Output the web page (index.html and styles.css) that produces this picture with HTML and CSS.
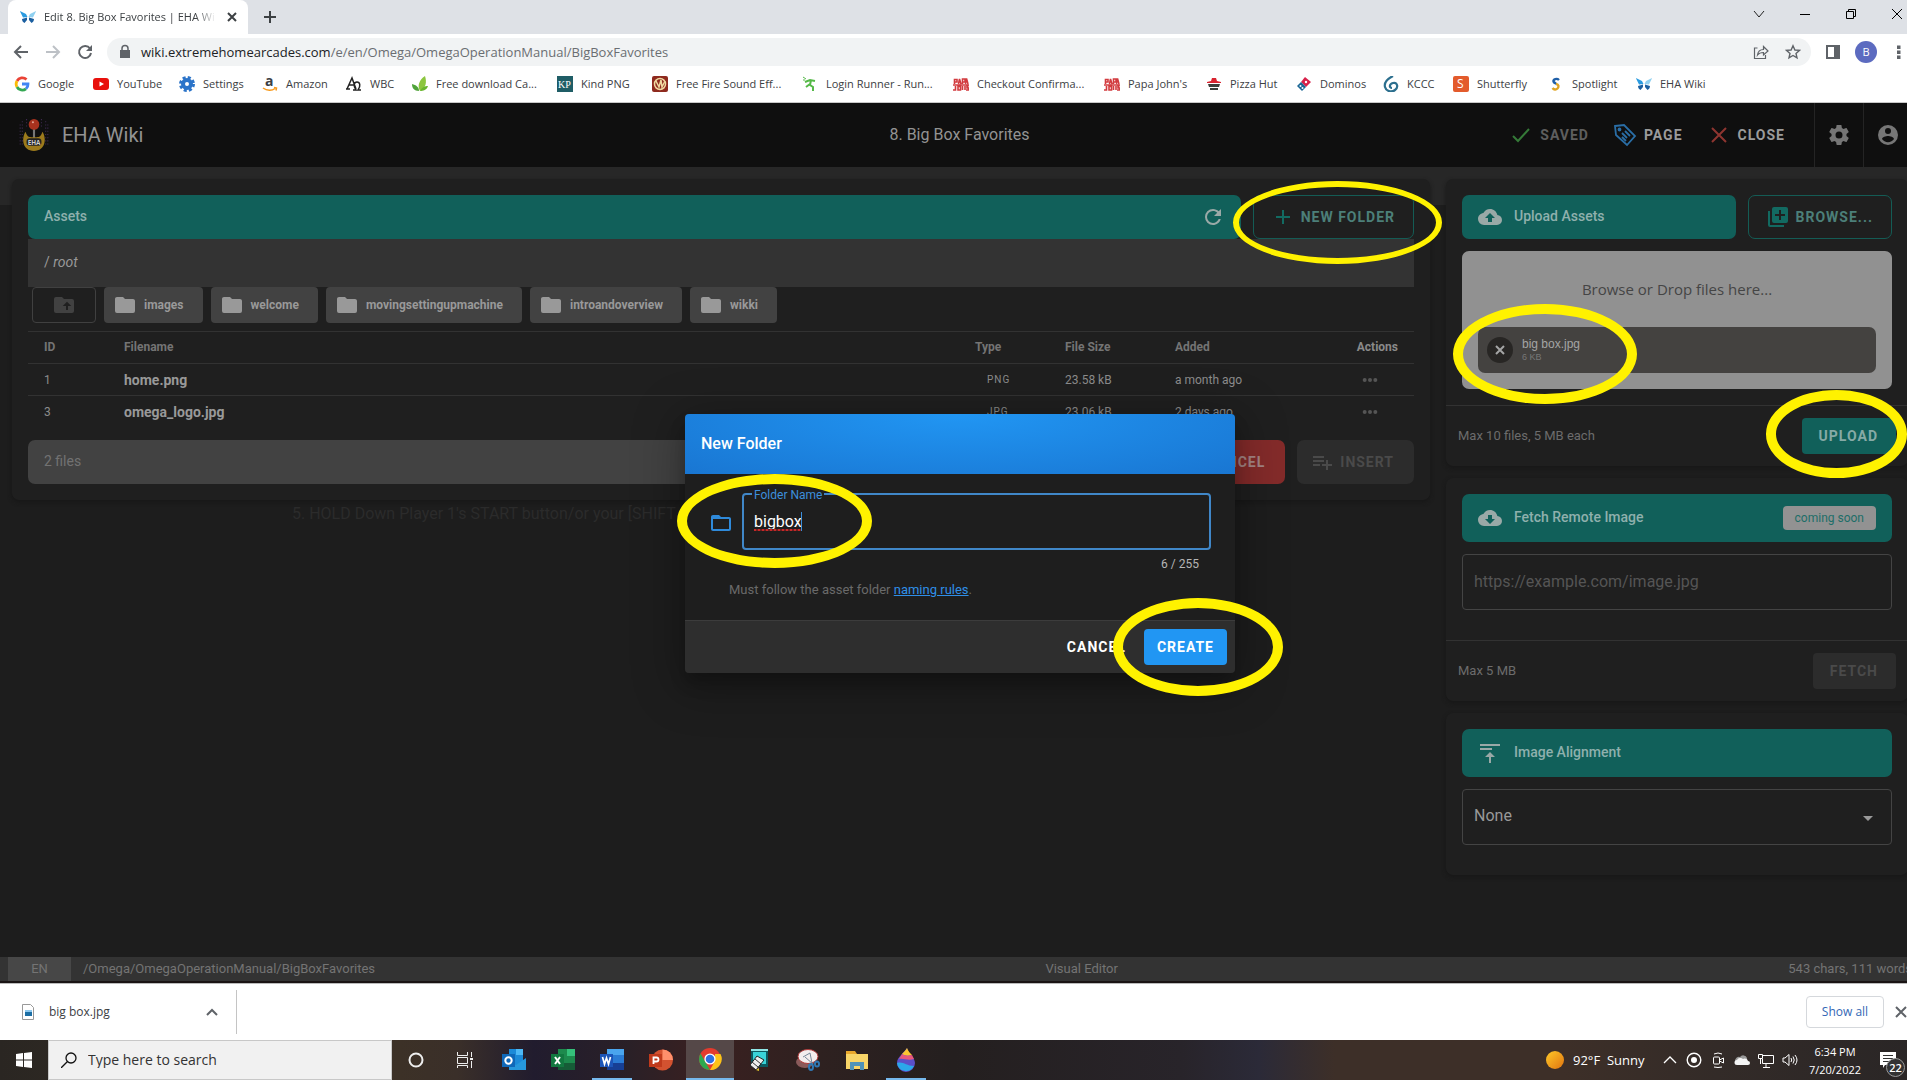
FILE: index.html
```html
<!DOCTYPE html>
<html lang="en">
<head>
<meta charset="utf-8">
<meta name="viewport" content="width=device-width, initial-scale=1">
<title>Edit 8. Big Box Favorites | EHA Wiki</title>
<link rel="stylesheet" href="styles.css">
</head>
<body>
<svg class="defs" aria-hidden="true">
  <symbol id="folder" viewBox="0 0 24 24"><path d="M10,4H4C2.89,4 2,4.89 2,6V18A2,2 0 0,0 4,20H20A2,2 0 0,0 22,18V8C22,6.89 21.1,6 20,6H12L10,4Z"/></symbol>
  <symbol id="dots" viewBox="0 0 24 24"><circle cx="4" cy="12" r="3"/><circle cx="12" cy="12" r="3"/><circle cx="20" cy="12" r="3"/></symbol>
  <symbol id="butterfly" viewBox="0 0 16 16"><path fill="#2a9be0" d="M0 2l6 3 1.500 3L3 8.500C2 6 .5 4 0 2z"/><path fill="#8fd0f0" d="M16 2l-6 3-1.500 3 4.500.5C14 6 15.500 4 16 2z"/><path fill="#1b5fa0" d="M2 10l5-1.500V11l-2.500 3C3 13 2 12 2 10zM14 10L9 8.500V11l2.500 3c1.500-1 2.500-2 2.500-4z"/></symbol>
  <symbol id="papa" viewBox="0 0 16 16"><path fill="none" stroke="#d23b3f" stroke-width="1.600" d="M1.500 8V3.500H4V6H1.500M5.500 8l1-5 1.500 5M9.500 8V3H12v3H9.500M12.500 8l1-5.500L15 8M0 9h16M2.500 10v4H0M5 10.500h2.500V14H5zM9.500 14v-4M12 14v-4M15.500 10.500H14V12h1.500v2H13"/></symbol>
</svg>

<header class="browser">
  <div class="tabstrip">
    <div class="tab">
      <svg class="i16"><use href="#butterfly"/></svg>
      <span class="tab-title">Edit 8. Big Box Favorites | EHA Wi</span>
      <button class="plain" aria-label="Close tab"><svg class="i16" viewBox="0 0 16 16"><path d="M4 4l8 8M12 4l-8 8" stroke="#3c4043" stroke-width="2"/></svg></button>
    </div>
    <button class="plain newtab" aria-label="New tab"><svg class="i16" viewBox="0 0 16 16"><path d="M8 2v12M2 8h12" stroke="#3c4043" stroke-width="2"/></svg></button>
    <div class="winctl">
      <button class="plain" aria-label="Search tabs"><svg class="i16" viewBox="0 0 16 16"><path d="M3 5l5 6 5-6" stroke="#222" fill="none"/></svg></button>
      <button class="plain" aria-label="Minimize"><svg class="i16" viewBox="0 0 16 16"><path d="M3 8.500h10" stroke="#000"/></svg></button>
      <button class="plain" aria-label="Restore"><svg class="i16" viewBox="0 0 16 16"><path d="M3.500 5.500h7v7h-7zM5.500 5V3.500h7v7H11" stroke="#000" fill="none"/></svg></button>
      <button class="plain" aria-label="Close window"><svg class="i16" viewBox="0 0 16 16"><path d="M3 3l10 10M13 3L3 13" stroke="#000"/></svg></button>
    </div>
  </div>
  <div class="toolbar">
    <button class="plain nav" aria-label="Back"><svg class="i16" viewBox="0 0 16 16"><path d="M15 8H2M8 2L2 8l6 6" stroke="#5f6368" stroke-width="2" fill="none"/></svg></button>
    <button class="plain nav" aria-label="Forward"><svg class="i16" viewBox="0 0 16 16"><path d="M1 8h13M8 2l6 6-6 6" stroke="#bdc1c6" stroke-width="2" fill="none"/></svg></button>
    <button class="plain nav" aria-label="Reload"><svg class="i16" viewBox="0 0 16 16"><path d="M13 4.500A6 6 0 1 0 14 9" stroke="#5f6368" stroke-width="2" fill="none"/><path d="M15 1v6H9z" fill="#5f6368"/></svg></button>
    <div class="omnibox">
      <svg class="i16" viewBox="0 0 16 16"><path d="M3 6h10v8H3z" fill="#5f6368"/><path d="M5 7V4.500a3 3 0 0 1 6 0V7" fill="none" stroke="#5f6368" stroke-width="1.500"/></svg>
      <span class="url"><b>wiki.extremehomearcades.com</b>/e/en/Omega/OmegaOperationManual/BigBoxFavorites</span>
      <svg class="i16" viewBox="0 0 16 16"><path d="M4.500 4H1.500v10.500h11V11M4.500 11c.5-4 3-5.500 6-5.500V2.500L15 7l-4.500 4V8.500c-3 0-4.500.5-6 2.500z" fill="none" stroke="#5f6368" stroke-width="1.200"/></svg>
      <svg class="i16" viewBox="0 0 16 16"><path d="M8 1.800l1.900 4.200 4.500.4-3.400 3 1 4.500L8 11.500l-4 2.400 1-4.500-3.400-3L6.100 6z" fill="none" stroke="#5f6368" stroke-width="1.400"/></svg>
    </div>
    <button class="plain" aria-label="Side panel"><svg class="i16" viewBox="0 0 16 16"><path d="M1 1h14v14H1zM3 3v10h6V3z" fill="#5f6368" fill-rule="evenodd"/></svg></button>
    <button class="avatar">B</button>
    <button class="plain" aria-label="Menu"><svg class="i16" viewBox="0 0 16 16"><path fill="#5f6368" d="M6 1.500h3.500V5H6zM6 6.500h3.500V10H6zM6 11.500h3.500V15H6z"/></svg></button>
  </div>
  <nav class="bookmarks">
    <a href="#"><svg class="i16" viewBox="0 0 16 16" fill="none" stroke-width="2.800"><path stroke="#ea4335" d="M3 5a6 6 0 0 1 9.500-1.500"/><path stroke="#fbbc05" d="M3 11a6 6 0 0 1 0-6"/><path stroke="#34a853" d="M3 11a6 6 0 0 0 9 1.800"/><path stroke="#4285f4" d="M8 8h6a6 6 0 0 1-2 4.800"/></svg>Google</a>
    <a href="#"><svg class="i16" viewBox="0 0 16 16"><rect y="2" width="16" height="12" rx="3" fill="#e8100c"/><path d="M6.500 5.500v5L11 8z" fill="#fff"/></svg>YouTube</a>
    <a href="#"><svg class="i16" viewBox="0 0 16 16"><circle cx="8" cy="8" r="4" fill="none" stroke="#2b74c9" stroke-width="4"/><circle cx="8" cy="8" r="6.500" fill="none" stroke="#2b74c9" stroke-width="3" stroke-dasharray="3 2.100"/></svg>Settings</a>
    <a href="#"><svg class="i16" viewBox="0 0 16 16"><text x="3" y="10" class="ico-text" font-size="14" font-weight="700">a</text><path d="M1 12c4 3 9 3 12 .5M12 11.500l2.500.5-.5 2.500" stroke="#f79a1c" stroke-width="1.500" fill="none"/></svg>Amazon</a>
    <a href="#"><svg class="i16" viewBox="0 0 16 16" fill="none" stroke="#222" stroke-width="1.500"><path d="M1 13L6 2l4 11M0 13h4M3 9h5M7 14h3c-3-4-2-8 1-8s4 4 1 8h3"/></svg>WBC</a>
    <a href="#"><svg class="i16" viewBox="0 0 16 16"><path d="M8 15C5 10 7 4 13 0c2 6 1 12-5 15z" fill="#8cc63f"/><path d="M7 15C2 15 0 12 0 8c4 1 7 3 7 7z" fill="#4fa33a"/><path d="M8 15c3 0 7-1 8-5-3 0-6 1-8 5z" fill="#68b52e"/></svg>Free download Ca...</a>
    <a href="#"><svg class="i16" viewBox="0 0 16 16"><path d="M0 0h16v16H0z" fill="#1f5d66"/><text x="1" y="12" class="ico-serif" font-size="10" fill="#fff">KP</text></svg>Kind PNG</a>
    <a href="#"><svg class="i16" viewBox="0 0 16 16"><rect width="16" height="16" rx="2" fill="#8e2a1e"/><circle cx="8" cy="8" r="5.500" fill="none" stroke="#f0d9a0" stroke-width="1.500"/><path d="M4 5l3 6 2-7 1 7 3-6" fill="none" stroke="#f0d9a0" stroke-width="1.500"/></svg>Free Fire Sound Eff...</a>
    <a href="#"><svg class="i16" viewBox="0 0 16 16" fill="none" stroke="#55b948" stroke-width="2"><path d="M3 6l5-2 5 1M9 4l-1 5 3 2v4M8 8l-4 3"/><path stroke-width="1" d="M1 1l3 2M1 4h2"/></svg>Login Runner - Run...</a>
    <a href="#"><svg class="i16"><use href="#papa"/></svg>Checkout Confirma...</a>
    <a href="#"><svg class="i16"><use href="#papa"/></svg>Papa John's</a>
    <a href="#"><svg class="i16" viewBox="0 0 16 16"><path d="M1 6l4-1 1-3h4l1 3 4 1v1H1z" fill="#d8232f"/><path d="M2 8h12l-1 3H3zM4 12h8v2H4z" fill="#3b3f3b"/></svg>Pizza Hut</a>
    <a href="#"><svg class="i16" viewBox="0 0 16 16"><path d="M9 1l6 5-5 5-5-5z" fill="#d8214a"/><path d="M5 6l5 5-4 4-5-5z" fill="#1b6795"/><g fill="#fff"><circle cx="10" cy="6" r="1.200"/><circle cx="4.500" cy="10" r="1"/><circle cx="6.500" cy="12" r="1"/></g></svg>Dominos</a>
    <a href="#"><svg class="i16" viewBox="0 0 16 16"><path d="M10 0C4 3 1 7 2 11s6 6 10 3 2-8-2-7-4 5-1 5" fill="none" stroke="#2c6f8e" stroke-width="2.200"/></svg>KCCC</a>
    <a href="#"><svg class="i16" viewBox="0 0 16 16"><rect width="16" height="16" rx="2" fill="#e35b2c"/><text x="4" y="12" class="ico-text" font-size="12" fill="#fff">S</text></svg>Shutterfly</a>
    <a href="#"><svg class="i16" viewBox="0 0 16 16"><path d="M11 4C9 2 5 3 5.500 5.500 6 7 8 7.500 8.500 8" fill="none" stroke="#1f5fa8" stroke-width="2.400"/><path d="M8 8c3 .5 3 3 1.500 4.500S6 14 4.500 12" fill="none" stroke="#e0a524" stroke-width="2.400"/></svg>Spotlight</a>
    <a href="#"><svg class="i16"><use href="#butterfly"/></svg>EHA Wiki</a>
  </nav>
</header>

<div class="app">
  <header class="appbar">
    <div class="brand">
      <svg class="logo" viewBox="0 0 30 32"><g stroke="#3f2b52" stroke-dasharray="1 2"><path d="M2 6v20M4 3v24M26 3v24M28 6v20M8 1v8M22 1v8"/></g><path d="M15 7v12" stroke="#777" stroke-width="2"/><circle cx="15" cy="6" r="5" fill="#a8321e"/><circle cx="14" cy="4" r="1" fill="#e0a090"/><path d="M7 13c-4 6-3 18 8 18s12-12 8-18c-2 6-4 5-8 5s-6 1-8-5z" fill="#9c7a1c"/><rect x="8" y="19" width="14" height="7" rx="3" fill="#222"/><text x="9" y="25" class="ico-text" font-size="6" font-weight="700" fill="#ccc">EHA</text></svg>
      <span>EHA Wiki</span>
    </div>
    <h1>8. Big Box Favorites</h1>
    <div class="appbar-actions">
      <button class="btn saved"><svg class="i24" viewBox="0 0 24 24"><path d="M4 13l5 5L20 6" fill="none" stroke="#357a38" stroke-width="2"/></svg>SAVED</button>
      <button class="btn"><svg class="i24" viewBox="0 0 24 24" fill="none" stroke="#2a6ea6" stroke-width="1.800"><path d="M2 3l9-1 11 11-8 9L3 12z"/><path d="M9 10l5 5M12 8l5 5M9 14l4 4"/><circle cx="6.500" cy="6.500" r="1"/></svg>PAGE</button>
      <button class="btn"><svg class="i24" viewBox="0 0 24 24"><path d="M5 5l14 14M19 5L5 19" stroke="#8e3530" stroke-width="2"/></svg>CLOSE</button>
      <button class="cell" aria-label="Settings"><svg class="i24" viewBox="0 0 24 24"><path d="M12,15.500A3.500,3.500 0 0,1 8.500,12A3.500,3.500 0 0,1 12,8.500A3.500,3.500 0 0,1 15.500,12A3.500,3.500 0 0,1 12,15.500M19.430,12.970C19.470,12.650 19.500,12.330 19.500,12C19.500,11.670 19.470,11.340 19.430,11L21.540,9.370C21.730,9.220 21.780,8.950 21.660,8.730L19.660,5.270C19.540,5.050 19.270,4.960 19.050,5.050L16.560,6.050C16.040,5.660 15.500,5.320 14.870,5.070L14.500,2.420C14.460,2.180 14.250,2 14,2H10C9.750,2 9.540,2.180 9.500,2.420L9.130,5.070C8.500,5.320 7.960,5.660 7.440,6.050L4.950,5.050C4.730,4.960 4.460,5.050 4.340,5.270L2.340,8.730C2.210,8.950 2.270,9.220 2.460,9.370L4.570,11C4.530,11.340 4.500,11.670 4.500,12C4.500,12.330 4.530,12.650 4.570,12.970L2.460,14.630C2.270,14.780 2.210,15.050 2.340,15.270L4.340,18.730C4.460,18.950 4.730,19.030 4.950,18.950L7.440,17.940C7.960,18.340 8.500,18.680 9.130,18.930L9.500,21.580C9.540,21.820 9.750,22 10,22H14C14.250,22 14.460,21.820 14.500,21.580L14.870,18.930C15.500,18.670 16.040,18.340 16.560,17.940L19.050,18.950C19.270,19.030 19.540,18.950 19.660,18.730L21.660,15.270C21.780,15.050 21.730,14.780 21.540,14.630L19.430,12.970Z"/></svg></button>
      <button class="cell" aria-label="Account"><svg class="i24" viewBox="0 0 24 24"><path fill-rule="evenodd" d="M12,2A10,10 0 0,0 2,12A10,10 0 0,0 12,22A10,10 0 0,0 22,12A10,10 0 0,0 12,2ZM12,5A3,3 0 0,1 15,8A3,3 0 0,1 12,11A3,3 0 0,1 9,8A3,3 0 0,1 12,5ZM12,19.200C9.500,19.200 7.290,17.920 6,16C6.030,14 10,12.900 12,12.900C14,12.900 17.970,14 18,16C16.710,17.920 14.500,19.200 12,19.200Z"/></svg></button>
    </div>
  </header>

  <main class="work">
    <div class="left">
      <section class="panel assets">
        <div class="row">
          <div class="bar grow"><h2>Assets</h2><button class="plain refresh" aria-label="Refresh"><svg class="i24" viewBox="0 0 24 24"><path d="M17.650,6.350C16.200,4.900 14.210,4 12,4A8,8 0 0,0 4,12A8,8 0 0,0 12,20C15.730,20 18.840,17.450 19.730,14H17.650C16.830,16.330 14.610,18 12,18A6,6 0 0,1 6,12A6,6 0 0,1 12,6C13.660,6 15.140,6.690 16.220,7.780L13,11H20V4L17.650,6.350Z"/></svg></button></div>
          <button class="btn outline ring ring-new"><svg class="i24" viewBox="0 0 24 24"><path d="M12 5v14M5 12h14" stroke="#126a61" stroke-width="2"/></svg>NEW FOLDER</button>
        </div>
        <div class="path">/ <em>root</em></div>
        <div class="folders">
          <button class="folder up" aria-label="Parent folder" disabled><svg class="i24" viewBox="0 0 24 24"><path d="M20,6A2,2 0 0,1 22,8V18A2,2 0 0,1 20,20H4A2,2 0 0,1 2,18V6A2,2 0 0,1 4,4H10L12,6H20M10.750,13H14V17H16V13H19.250L15,8.750"/></svg></button>
          <button class="folder"><svg class="i24"><use href="#folder"/></svg>images</button>
          <button class="folder"><svg class="i24"><use href="#folder"/></svg>welcome</button>
          <button class="folder"><svg class="i24"><use href="#folder"/></svg>movingsettingupmachine</button>
          <button class="folder"><svg class="i24"><use href="#folder"/></svg>introandoverview</button>
          <button class="folder"><svg class="i24"><use href="#folder"/></svg>wikki</button>
        </div>
        <table>
          <thead><tr><th class="c-id">ID</th><th>Filename</th><th class="c-type">Type</th><th class="c-size">File Size</th><th class="c-added">Added</th><th class="c-act">Actions</th></tr></thead>
          <tbody>
            <tr><td>1</td><td class="name">home.png</td><td><span class="type">PNG</span></td><td>23.58 kB</td><td>a month ago</td><td class="c-act"><button class="plain more" aria-label="Actions for home.png"><svg class="i16"><use href="#dots"/></svg></button></td></tr>
            <tr><td>3</td><td class="name">omega_logo.jpg</td><td><span class="type">JPG</span></td><td>23.06 kB</td><td>2 days ago</td><td class="c-act"><button class="plain more" aria-label="Actions for omega_logo.jpg"><svg class="i16"><use href="#dots"/></svg></button></td></tr>
          </tbody>
        </table>
        <div class="row foot">
          <div class="count grow">2 files</div>
          <button class="btn red"><svg class="i24" viewBox="0 0 24 24"><path d="M6 6l12 12M18 6L6 18" stroke="#a08080" stroke-width="2"/></svg>CANCEL</button>
          <button class="btn off tall"><svg class="i24" viewBox="0 0 24 24"><path d="M3,16H10V14H3M18,14V10H16V14H12V16H16V20H18V16H22V14M14,6H3V8H14M14,10H3V12H14V10Z"/></svg>INSERT</button>
        </div>
      </section>
      <p class="ghost">5. HOLD Down Player 1's START button/or your [SHIFT</p>
    </div>

    <aside class="right">
      <section class="panel">
        <div class="pad">
          <div class="row">
            <div class="bar grow"><svg class="i24" viewBox="0 0 24 24"><path d="M14,13V17H10V13H7L12,8L17,13M19.350,10.030C18.670,6.590 15.640,4 12,4C9.110,4 6.600,5.640 5.350,8.030C2.340,8.360 0,10.900 0,14A6,6 0 0,0 6,20H19A5,5 0 0,0 24,15C24,12.360 21.950,10.220 19.350,10.030Z"/></svg><h2>Upload Assets</h2></div>
            <button class="btn outline"><svg class="i24 teal" viewBox="0 0 24 24"><path d="M19,11H15V15H13V11H9V9H13V5H15V9H19M20,2H8A2,2 0 0,0 6,4V16A2,2 0 0,0 8,18H20A2,2 0 0,0 22,16V4A2,2 0 0,0 20,2M4,6H2V20A2,2 0 0,0 4,22H18V20H4V6Z"/></svg>BROWSE...</button>
          </div>
          <div class="drop">
            <p>Browse or Drop files here...</p>
            <div class="upfile"><div class="upinfo ring ring-file"><button class="remove" aria-label="Remove file"><svg class="i16" viewBox="0 0 16 16"><path d="M4 4l8 8M12 4l-8 8" stroke="#a5a5a5" stroke-width="2"/></svg></button><div><strong>big box.jpg</strong><small>6 KB</small></div></div></div>
          </div>
        </div>
        <div class="actions"><span>Max 10 files, 5 MB each</span><button class="btn solid ring ring-upload">UPLOAD</button></div>
      </section>
      <section class="panel">
        <div class="pad fetch">
          <div class="bar high"><svg class="i24" viewBox="0 0 24 24"><path d="M17,13L12,18L7,13H10V9H14V13M19.350,10.030C18.670,6.590 15.640,4 12,4C9.110,4 6.600,5.640 5.350,8.030C2.340,8.360 0,10.900 0,14A6,6 0 0,0 6,20H19A5,5 0 0,0 24,15C24,12.360 21.950,10.220 19.350,10.030Z"/></svg><h2>Fetch Remote Image</h2><span class="soon">coming soon</span></div>
          <input class="field" type="url" aria-label="Image URL" placeholder="https://example.com/image.jpg">
        </div>
        <div class="actions"><span>Max 5 MB</span><button class="btn off" disabled>FETCH</button></div>
      </section>
      <section class="panel">
        <div class="pad align">
          <div class="bar high"><svg class="i24" viewBox="0 0 24 24"><path d="M2 3h20v2H2zM2 7h12v2H2zM7 16l5-5 5 5h-4v6h-2v-6z"/></svg><h2>Image Alignment</h2></div>
          <div class="selectbox"><select class="field" aria-label="Image Alignment"><option>None</option><option>Left</option></select><svg class="i24" viewBox="0 0 24 24"><path d="M7,10L12,15L17,10H7Z"/></svg></div>
        </div>
      </section>
    </aside>
  </main>

  <footer class="status"><div class="status-left"><span class="lang">EN</span><span>/Omega/OmegaOperationManual/BigBoxFavorites</span></div><span>Visual Editor</span><span>543 chars, 111 words</span></footer>

  <div class="overlay">
    <div class="dialog" role="dialog" aria-labelledby="dlg-title">
      <h2 id="dlg-title">New Folder</h2>
      <div class="dialog-body">
        <div class="input-row">
          <svg class="i24" viewBox="0 0 24 24"><path d="M20,18H4V8H20M20,6H12L10,4H4C2.890,4 2,4.890 2,6V18A2,2 0 0,0 4,20H20A2,2 0 0,0 22,18V8C22,6.890 21.100,6 20,6Z"/></svg>
          <div class="outlined ring ring-name">
            <label for="fname">Folder Name</label>
            <input id="fname" type="text" value="bigbox" maxlength="255" spellcheck="false">
            <span class="squiggle"></span>
          </div>
        </div>
        <div class="counter">6 / 255</div>
        <p>Must follow the asset folder <a href="#">naming rules</a>.</p>
      </div>
      <div class="dialog-foot"><button class="btn text">CANCEL</button><button class="btn create ring ring-create">CREATE</button></div>
    </div>
  </div>
</div>

<div class="downloads">
  <div class="dl-item"><svg class="i16" viewBox="0 0 16 16"><path d="M2.500.5h8l3 3v12h-11z" fill="#fff" stroke="#999"/><path d="M5 6h7v6H5z" fill="#1c6ea4"/><path d="M5 6h7v2H5z" fill="#8cc8ee"/></svg><span>big box.jpg</span><button class="plain" aria-label="Options"><svg class="i16" viewBox="0 0 16 16"><path d="M3 11l5-5 5 5" fill="none" stroke="#5f6368" stroke-width="2"/></svg></button></div>
  <button class="showall">Show all</button>
  <button class="plain" aria-label="Close downloads"><svg class="i16" viewBox="0 0 16 16"><path d="M3 3l10 10M13 3L3 13" stroke="#5f6368" stroke-width="2"/></svg></button>
</div>

<footer class="taskbar">
  <button class="plain start" aria-label="Start"><svg class="i16" viewBox="0 0 16 16"><path d="M0 2l7-1v6.500H0zM8 1l8-1v7.500H8zM0 8.500h7V15l-7-1zM8 8.500h8V16l-8-1z" fill="#fff"/></svg></button>
  <label class="search"><svg class="i16" viewBox="0 0 16 16"><circle cx="10" cy="6" r="5" fill="none" stroke="#111" stroke-width="1.300"/><path d="M6.500 9.500L0 16" stroke="#111" stroke-width="1.300"/></svg><input type="text" aria-label="Search" placeholder="Type here to search"></label>
  <div class="apps">
    <button class="plain" aria-label="Cortana"><svg viewBox="0 0 24 24"><circle cx="12" cy="12" r="6.500" fill="none" stroke="#eee" stroke-width="2"/></svg></button>
    <button class="plain" aria-label="Task view"><svg viewBox="0 0 24 24" fill="none" stroke="#eee"><path d="M4.500 4v3.500h10V4M4.500 9.500h10v6h-10zM4.500 20v-2.500h10V20M18.500 4v5M18.500 13v7"/><path d="M17 11h3" stroke-width="2"/></svg></button>
    <button class="plain" aria-label="Outlook"><svg viewBox="0 0 24 24"><path d="M7 1h14v16H7z" fill="#1b8ad8"/><path d="M14 1h7v6h-7z" fill="#4db8f5"/><path d="M7 13l7 4 10-7v12H7z" fill="#2698dc"/><path d="M0 6h13v13H0z" fill="#0f68b8"/><circle cx="6.500" cy="12.500" r="3.200" fill="none" stroke="#fff" stroke-width="2"/></svg></button>
    <button class="plain" aria-label="Excel"><svg viewBox="0 0 24 24"><path d="M7 1h17v21H7z" fill="#1d8a4d"/><path d="M16 1h8v7h-8z" fill="#35c07a"/><path d="M7 15h17v7H7z" fill="#165c37"/><path d="M0 6h13v13H0z" fill="#127840"/><path d="M4 9l5 7M9 9l-5 7" stroke="#fff" stroke-width="2"/></svg></button>
    <button class="plain open" aria-label="Word"><svg viewBox="0 0 24 24"><path d="M7 1h17v21H7z" fill="#2a7bd4"/><path d="M7 1h17v6H7z" fill="#4aa5ee"/><path d="M7 15h17v7H7z" fill="#173f94"/><path d="M0 6h13v13H0z" fill="#1c55b8"/><path d="M2.500 9l2 7 2-6 2 6 2-7" fill="none" stroke="#fff" stroke-width="1.700"/></svg></button>
    <button class="plain" aria-label="PowerPoint"><svg viewBox="0 0 24 24"><circle cx="13.500" cy="12" r="10.500" fill="#d35230"/><path d="M13.500 1.500A10.500 10.500 0 0 1 24 12H13.500z" fill="#ff8f6b"/><path d="M0 6h13v13H0z" fill="#c03a1c"/><path d="M4.500 16V9.500h3a2 2 0 0 1 0 4h-3" fill="none" stroke="#fff" stroke-width="1.800"/></svg></button>
    <button class="plain active" aria-label="Chrome"><svg viewBox="0 0 24 24"><circle cx="12" cy="12" r="11" fill="#e33b2e"/><path d="M2.500 6.500L12 23A11 11 0 0 1 2.500 6.500z" fill="#2da94f"/><path d="M12 23l5-9V7h5.500A11 11 0 0 1 12 23z" fill="#fdc318"/><circle cx="12" cy="12" r="5.600" fill="#fff"/><circle cx="12" cy="12" r="4.300" fill="#2f6fe0"/></svg></button>
    <button class="plain" aria-label="Editor"><svg viewBox="0 0 24 24"><path d="M4 1h17v18H4z" fill="#0c5a60"/><path d="M4 1h17v2H4z" fill="#8fe6e6"/><path d="M6 4h13v12H6z" fill="#39d3d8"/><path d="M3 17L10 8l7 4-8 10z" fill="#eee" stroke="#222"/><path d="M5 14l6 5M8 11l6 5" stroke="#333"/><path d="M9 22l3-2v3z" fill="#dfc52c"/></svg></button>
    <button class="plain" aria-label="Snipping Tool"><svg viewBox="0 0 24 24"><ellipse cx="9" cy="14" rx="9" ry="6" fill="#8a5a5a"/><ellipse cx="12" cy="8.500" rx="10" ry="7" fill="#f3eeee" stroke="#b03a3a"/><path d="M7 9l7-4M14 5l2 10M9 9l8 7" stroke="#789" fill="none"/><g fill="none" stroke="#2f78b5" stroke-width="2"><ellipse cx="15" cy="19" rx="2" ry="3"/><ellipse cx="21" cy="16" rx="2" ry="2.500"/></g></svg></button>
    <button class="plain" aria-label="File Explorer"><svg viewBox="0 0 24 24"><path d="M1 3h9l2 3h11v15H1z" fill="#e9a82c"/><path d="M1 6h22v15H1z" fill="#f8d568"/><path d="M5 14h14v8h-4v-4H9v4H5z" fill="#4f93b8"/></svg></button>
    <button class="plain open" aria-label="Paint 3D"><svg viewBox="0 0 24 24"><path d="M13 0c1 6 8 9 8 15a9 9 0 0 1-18 0C3 9 10 5 13 0z" fill="#5b4fc9"/><path d="M13 0c1 3 3 5 5 7-4 1-7 1-10-1 2-2 4-4 5-6z" fill="#fbc531"/><path d="M8 6c3 2 6 2 10 1l2 4c-6 2-10-1-15 0z" fill="#e8577d"/><path d="M3 15c6-2 9 3 17 3a9 9 0 0 1-17-3z" fill="#2ba7ea"/></svg></button>
  </div>
  <div class="tray">
    <svg class="i20" viewBox="0 0 20 20"><defs><linearGradient id="sun" x2="1" y2="1"><stop offset="0" stop-color="#ffc928"/><stop offset="1" stop-color="#e07410"/></linearGradient></defs><circle cx="10" cy="10" r="9" fill="url(#sun)"/></svg>
    <span class="weather">92°F&nbsp; Sunny</span>
    <svg class="i16" viewBox="0 0 16 16"><path d="M2 11l6-6 6 6" fill="none" stroke="#fff" stroke-width="1.300"/></svg>
    <svg class="i16" viewBox="0 0 16 16"><circle cx="8" cy="8" r="6.800" fill="none" stroke="#fff" stroke-width="1.400"/><circle cx="8" cy="8" r="3" fill="#fff"/></svg>
    <svg class="i16" viewBox="0 0 16 16" fill="none" stroke="#fff"><rect x="3.500" y="5" width="6" height="7" rx="1"/><path d="M9.500 8l4-2v5l-4-2M4 2q4-2 8 0M4 15q4 1 8 0"/></svg>
    <svg class="i16" viewBox="0 0 16 16"><path d="M1 9a4 4 0 0 1 5-4 4 4 0 0 1 7 1v6H2z" fill="#999"/><path d="M3 13a2.500 2.500 0 0 1 0-5 4 4 0 0 1 6-1 3.500 3.500 0 0 1 5 2 2 2 0 0 1 0 4z" fill="#f4f4f4"/></svg>
    <svg class="i16" viewBox="0 0 16 16" fill="none" stroke="#fff"><path d="M5 3.500h10.500v8h-11V7M8 12v3M5 15.500h7M.5 2.500h4v4h-4zM2.500 7v5"/></svg>
    <svg class="i16" viewBox="0 0 16 16" fill="none" stroke="#fff"><path d="M1 6v4h2l4 3.500v-11L3 6zM9 6q1.500 2 0 4M11 4.500q2.500 3.500 0 7M13 3q4 5 0 10"/></svg>
    <div class="clock"><span>6:34 PM</span><span>7/20/2022</span></div>
    <button class="plain notif" aria-label="Notifications"><svg class="i16" viewBox="0 0 16 16"><path d="M0 0h16v13H5l-2 3v-3H0z" fill="#fff"/><path d="M3 3.500h10M3 6.500h10M3 9.500h6" stroke="#333"/></svg><span>22</span></button>
  </div>
</footer>
</body>
</html>
```
FILE: styles.css
```css
*, *::after { box-sizing: border-box; }
body {
  margin: 0;
  min-height: 100vh;
  display: flex;
  flex-direction: column;
  overflow-x: hidden;
  background: #1d1d1d;
  color: #999;
  font: 12px/16px Roboto, sans-serif;
}
h1, h2, p { margin: 0; font-weight: 400; }
button, input, select { font: inherit; color: inherit; }
svg { display: block; flex: none; }
svg:not([fill]) { fill: currentColor; }
.defs { position: absolute; width: 0; height: 0; }
.i16 { width: 16px; height: 16px; }
.i20 { width: 20px; height: 20px; }
.i24 { width: 24px; height: 24px; }
.ico-text { font-family: "Open Sans", sans-serif; }
.ico-serif { font-family: "Liberation Serif", serif; }
.plain { display: flex; align-items: center; justify-content: center; border: 0; padding: 0; background: none; }
.grow { flex: 1; }
.row { display: flex; gap: 12px; }

/* Browser window */
.browser, .downloads, .taskbar { font-family: "Open Sans", sans-serif; }
.browser { background: #fff; border-bottom: 1px solid #c8c8c8; color: #3c4043; }
.tabstrip { display: flex; align-items: center; height: 34px; padding-left: 8px; background: #dee1e6; }
.tab { display: flex; align-items: center; gap: 8px; width: 240px; height: 34px; padding: 0 8px 0 12px; background: #fff; border-radius: 8px 8px 0 0; }
.tab-title { flex: 1; overflow: hidden; white-space: nowrap; font-size: 11px; mask-image: linear-gradient(to right, #000 88%, transparent); }
.newtab { margin-left: 14px; }
.winctl { display: flex; gap: 30px; margin: 0 2px 6px auto; }
.toolbar { display: flex; align-items: center; gap: 14px; height: 34px; padding-left: 13px; margin-top: 1px; }
.nav { margin-right: 2px; }
.omnibox { display: flex; align-items: center; gap: 16px; flex: 1; height: 28px; margin-left: -2px; padding: 0 10px; border-radius: 14px; background: #f1f3f4; }
.url { flex: 1; margin-left: -8px; font-size: 13px; line-height: 20px; color: #6a6e72; }
.url b { font-weight: 400; color: #202124; }
.avatar { width: 22px; height: 22px; padding: 0; border: 0; border-radius: 50%; background: #5c6bc0; color: #fff; font-size: 11px; line-height: 22px; }
.bookmarks { display: grid; grid-template-columns: 79px 86px 83px 84px 66px 145px 95px 150px 151px 151px 102px 90px 87px 70px 95px 88px auto; align-items: center; height: 33px; padding: 0 0 3px 14px; }
.bookmarks a { display: flex; align-items: center; gap: 8px; color: #3c4043; text-decoration: none; white-space: nowrap; font-size: 11px; line-height: 18px; }

/* Wiki application */
.app { position: relative; flex: 1; display: flex; flex-direction: column; border-bottom: 2px solid #1a1414; }
.appbar { display: grid; grid-template-columns: 1fr auto 1fr; align-items: center; height: 64px; background: #0f0f0f; }
.brand { display: flex; align-items: center; gap: 12px; padding-left: 18px; font-size: 20px; color: #939393; }
.logo { width: 32px; height: 34px; }
.appbar h1 { font-size: 16px; line-height: 20px; margin-left: 12px; color: #939393; }
.appbar-actions { display: flex; align-items: center; justify-content: flex-end; height: 64px; margin-right: -5px; }
.appbar-actions .btn { gap: 7px; padding: 0 12px; color: #9b9b9b; }
.appbar-actions .btn.saved { color: #5e5e5e; }
.appbar-actions .btn:nth-child(3) { margin-right: 17px; }
.cell { display: flex; align-items: center; justify-content: center; width: 49px; height: 64px; padding: 0; border: 0; border-left: 1px solid #242424; background: none; color: #767676; }

.btn { position: relative; display: flex; align-items: center; justify-content: center; gap: 6px; height: 36px; padding: 0 18px 0 17px; border: 0; border-radius: 4px; background: none; font-size: 14px; font-weight: 700; letter-spacing: 1px; white-space: nowrap; }
.outline { height: 44px; border: 1px solid #145c55; border-radius: 7px; color: #4c7f79; }
.outline .teal { color: #126a61; }
.solid { background: #11605a; color: #86aaa6; }
.red { height: 44px; background: #842b2a; border-radius: 7px; padding-right: 20px; color: #a58484; }
.off { background: #2c2c2c; color: #4a4a4a; }
.off.tall { height: 44px; border-radius: 7px; padding: 0 20px 0 13px; }

.work { flex: 1; display: flex; gap: 16px; padding: 12px 0 12px 12px; background: linear-gradient(#272727 38px, #1d1d1d 38px); }
.left { flex: 1; min-width: 0; }
.right { width: 462px; margin-right: -1px; display: flex; flex-direction: column; gap: 12px; }
.panel { background: #1f1f1f; border-radius: 7px; box-shadow: 0 2px 4px #171717; }
.assets { padding: 16px; }
.bar { display: flex; align-items: center; gap: 12px; height: 44px; padding: 0 16px; border-radius: 7px; background: #11605a; color: #9aa9a7; }
.bar h2 { flex: 1; padding-bottom: 2px; font-size: 14px; font-weight: 500; color: #8fb0ad; }
.bar.high { height: 48px; }
.path { height: 48px; padding: 0 16px; background: #333; font-size: 14px; line-height: 46px; color: #999; }
.folders { display: flex; gap: 8px; padding: 0 4px; }
.folder { display: flex; align-items: center; gap: 7px; height: 36px; padding: 0 19px 0 9px; border: 0; border-radius: 4px; background: #424242; font-weight: 700; color: #999; }
.folder.up { width: 64px; padding: 0; justify-content: center; border: 1px solid #404040; background: none; color: #414141; }
table { width: 100%; margin-top: 8px; table-layout: fixed; border-collapse: collapse; }
th, td { height: 32px; padding: 0 16px; border-top: 1px solid #323232; text-align: left; font-weight: 400; color: #8c8c8c; }
th { padding-bottom: 2px; font-weight: 700; color: #747474; }
.c-id { width: 80px; }
.c-type { width: 90px; }
.c-size { width: 110px; }
.c-added { width: 150px; }
.c-act { width: 105px; text-align: right; }
th.c-act { color: #8a8a8a; }
td.name { font-size: 14px; font-weight: 700; color: #999; }
.type { margin-left: 12px; font-size: 10px; letter-spacing: 1px; }
.more { margin: 0 16px 0 auto; color: #555; width: 24px; }
.foot { margin-top: 12px; }
.count { height: 44px; padding: 0 16px; border-radius: 7px; background: #424242; font-size: 14px; line-height: 42px; color: #727272; }
.ghost { padding: 4px 0 0 280px; font-size: 16px; line-height: 20px; color: #2b2b2b; white-space: nowrap; }

.pad { padding: 16px; }
.pad.fetch, .pad.align { padding-bottom: 30px; }
.drop { margin-top: 12px; padding: 24px 16px 16px; height: 138px; border-radius: 7px; background: #919191; }
.drop p { font: 15px/28px "Open Sans", sans-serif; text-align: center; color: #454545; }
.upfile { margin-top: 24px; border-radius: 7px; background: #444240; font-family: "Liberation Sans", sans-serif; }
.upinfo { position: relative; display: flex; align-items: center; gap: 9px; width: 120px; height: 46px; padding-left: 9px; }
.upfile strong, .upfile small { display: block; font-weight: 400; }
.upfile strong { font-size: 12px; line-height: 14px; color: #a5a5a5; white-space: nowrap; }
.upfile small { font-size: 9px; line-height: 12px; color: #777; }
.remove { display: flex; align-items: center; justify-content: center; width: 26px; height: 26px; padding: 0; border: 0; border-radius: 50%; background: #282624; }
.actions { display: flex; align-items: center; justify-content: space-between; height: 61px; padding: 0 12px; border-top: 1px solid #323232; color: #6c6c6c; font-size: 13px; }
.field { display: block; width: 100%; height: 56px; margin-top: 12px; padding: 0 11px 2px; border: 1px solid #444; border-radius: 4px; background: none; font-size: 16px; appearance: none; }
.field::placeholder { color: #555; opacity: 1; }
.soon { padding: 4px 12px; border-radius: 4px; background: #929292; color: #1d6e68; }
.selectbox { position: relative; }
.selectbox svg { position: absolute; right: 12px; top: 17px; }
.status { display: flex; align-items: center; justify-content: space-between; height: 24px; margin-right: -5px; background: #333; color: #747474; font-size: 13px; }
.status-left { display: flex; align-items: center; gap: 12px; padding-left: 8px; }
.lang { width: 63px; line-height: 24px; background: #474747; text-align: center; }

/* New folder dialog */
.overlay { position: absolute; inset: 0 -13px -2px 0; display: flex; align-items: center; justify-content: center; pointer-events: none; }
.dialog { width: 550px; border-radius: 4px; background: #1e1e1e; box-shadow: 0 11px 15px rgba(0,0,0,.2), 0 9px 46px 8px rgba(0,0,0,.25); pointer-events: auto; }
.dialog h2 { height: 60px; padding: 0 16px; border-radius: 4px 4px 0 0; background: radial-gradient(ellipse at top, #2196f3, #1976d2); color: #fff; font-size: 16px; font-weight: 500; line-height: 60px; }
.dialog-body { height: 146px; padding: 19px 24px 0; }
.input-row { display: flex; align-items: center; gap: 9px; color: #2f8ada; }
.input-row > svg { margin-top: 4px; }
.outlined { position: relative; flex: 1; border: 2px solid #4087c8; border-radius: 4px; }
.outlined label { position: absolute; left: 8px; top: -7px; padding: 0 2px; background: #1e1e1e; color: #3d8fdc; line-height: 14px; z-index: 1; }
.outlined input { display: block; width: 100%; height: 53px; padding: 0 10px; border: 0; outline: 0; background: none; color: #fff; font-size: 16px; }
.squiggle { position: absolute; left: 10px; top: 34px; width: 48px; height: 2px; background: repeating-linear-gradient(90deg, #c62828 0 2px, #6b2020 2px 4px); }
.squiggle::after { content: ""; position: absolute; right: 0; bottom: 0; width: 1px; height: 19px; background: #3d8fdc; }
.counter { margin: 6px 12px 0; text-align: right; color: #b5b5b5; }
.dialog-body p { margin: 10px 0 0 20px; color: #6a6a6a; font-size: 13px; }
.dialog-body a { color: #2f8fe8; }
.dialog-foot { display: flex; align-items: center; justify-content: flex-end; height: 53px; padding: 0 8px; border-top: 1px solid #3c3c3c; border-radius: 0 0 4px 4px; background: #2e2e2e; }
.btn.text { color: #fff; }
.create { padding: 0 13px; background: #2196f3; color: #fff; }

/* Highlighter rings drawn round a control */
.ring::after { content: ""; position: absolute; border: 10px solid #fff200; border-radius: 50%; pointer-events: none; z-index: 2; }
.ring-new::after { inset: -15px -29px -26px -21px; border-width: 6px; }
.ring-file::after { inset: -23px -39px -31px -25px; }
.ring-upload::after { inset: -28px -11px -24px -36px; }
.ring-name::after { left: -67px; top: -21px; width: 195px; height: 94px; }
.ring-create::after { inset: -31px -56px -31px -31px; }

/* Download shelf and taskbar */
.downloads { display: flex; align-items: center; height: 57px; border-top: 1px solid #bbb; background: #fff; color: #3c4043; }
.dl-item { display: flex; align-items: center; gap: 13px; width: 237px; height: 44px; padding: 0 16px 0 20px; border-right: 1px solid #c4c4c4; }
.dl-item span { flex: 1; }
.showall { width: 78px; height: 32px; margin-left: auto; margin-right: 9px; padding: 0; border: 1px solid #d5d8dc; border-radius: 4px; background: #fff; color: #3367b5; }
.downloads > .plain { margin-right: -2px; }
.taskbar { display: flex; height: 40px; color: #fff; background: linear-gradient(90deg, #2a2622 0, #3c3127 21%, #3a2f29 24%, #211c2e 28%, #2a2027 33%, #3a2020 37%, #2e2120 43%, #241f1f 50%, #28242a 62%, #2b2a38 66%, #3d2f28 70%, #3d2f28 82%, #332b28 90%, #2a2626); }
.start { width: 48px; }
.search { display: flex; align-items: center; gap: 11px; width: 344px; padding: 0 12px; border: 1px solid #c8c8c8; background: #f1f1f1; }
.search input { flex: 1; min-width: 0; padding: 0; border: 0; background: none; font-size: 14px; }
.search input::placeholder { color: #333; opacity: 1; }
.apps { display: flex; gap: 1px; }
.apps .plain { width: 48px; }
.apps svg { width: 24px; height: 24px; }
.open { background: linear-gradient(#76b9ed, #76b9ed) center bottom / 40px 2px no-repeat; }
.apps .active { background: #554848; border-bottom: 2px solid #76b9ed; }
.tray { display: flex; align-items: center; gap: 8px; margin-left: auto; padding-right: 3px; }
.weather { width: 81px; font-size: 13px; white-space: nowrap; }
.clock { display: grid; width: 58px; margin-right: 8px; gap: 1px; text-align: center; font-size: 11px; line-height: 17px; }
.notif { position: relative; width: 24px; justify-content: flex-start; }
.notif span { position: absolute; left: 6px; top: 6px; width: 19px; height: 19px; border: 1px solid #999; border-radius: 50%; background: #333; font-size: 11px; line-height: 17px; font-weight: 600; }
```
